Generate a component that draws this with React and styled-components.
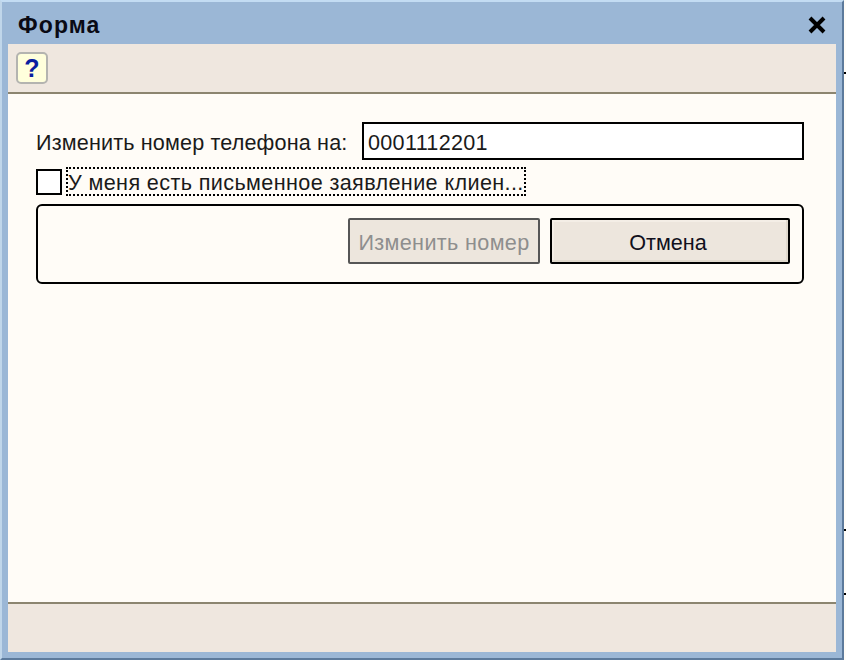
import React from "react";
import styled, { createGlobalStyle } from "styled-components";

const Global = createGlobalStyle`
  html, body { margin: 0; padding: 0; background: #fffcf7; }
  #root { width: 846px; height: 660px; overflow: hidden; }
  * { box-sizing: border-box; }
`;

const Page = styled.div`
  display: flex;
  width: 846px;
  height: 660px;
  font-family: "Liberation Sans", Arial, sans-serif;
  font-size: 21.6px;
  color: #1a1a1a;
`;
const Win = styled.div`
  width: 844px;
  height: 660px;
  display: flex;
  flex-direction: column;
  background: #9bb7d6;
  border-top: 2px solid #c3dcf3;
  border-left: 2px solid #c0d6ea;
  border-right: 2px solid #5c7a9c;
  border-bottom: 2px solid #5c7a9c;
  padding: 0 6px 6px;
`;
const Edge = styled.div`
  position: relative;
  width: 2px;
  height: 660px;
`;
const Tick = styled.i`
  position: absolute;
  left: 0;
  top: ${p => p.$y}px;
  width: 2px;
  height: 2px;
  background: #000;
`;
const TitleBar = styled.div`
  height: 42px;
  flex: none;
  display: flex;
  align-items: center;
  justify-content: space-between;
  padding: 3px 0 0 10px;
`;
const Title = styled.div`
  font-weight: 700;
  font-size: 23px;
  color: #0a0a14;
  letter-spacing: 1.1px;
  padding-top: 2px;
`;
const Close = styled.svg`
  display: block;
  width: 18px;
  height: 18px;
  margin-right: 10px;
`;
const Toolbar = styled.div`
  height: 50px;
  flex: none;
  background: #efe7df;
  border-bottom: 2px solid #8c8570;
  padding: 8px 0 0 8px;
`;
const HelpBtn = styled.div`
  width: 32px;
  height: 32px;
  border: 2px solid #b4b4b0;
  border-radius: 5px;
  background: #ffffdc;
  display: flex;
  align-items: center;
  justify-content: center;
  font-weight: 700;
  font-size: 25px;
  color: #0a1ea0;
`;
const Body = styled.div`
  flex: 1;
  background: #fffcf7;
  padding: 28px 32px 0 28px;
  display: flex;
  flex-direction: column;
`;
const Row = styled.div`
  display: flex;
  align-items: center;
  height: 38px;
`;
const Label = styled.div`
  width: 326px;
  flex: none;
  white-space: nowrap;
  padding-top: 4px;
  letter-spacing: 0.15px;
`;
const Input = styled.div`
  flex: 1;
  height: 38px;
  border: 2px solid #000;
  background: #fff;
  padding: 4px 0 0 4px;
  display: flex;
  align-items: center;
  line-height: 1;
  letter-spacing: 0.3px;
`;
const CheckRow = styled.div`
  display: flex;
  align-items: center;
  gap: 4px;
  margin-top: 7px;
  height: 29px;
`;
const CheckBox = styled.div`
  width: 26px;
  height: 26px;
  border: 2px solid #000;
  background: #fff;
`;
const CheckLabel = styled.div`
  width: 460px;
  height: 29px;
  border: 2px dotted #000;
  display: flex;
  align-items: center;
  white-space: nowrap;
  letter-spacing: 0.38px;
  padding-top: 3px;
`;
const Group = styled.div`
  margin-top: 8px;
  height: 80px;
  border: 2px solid #000;
  border-radius: 6px;
  display: flex;
  justify-content: flex-end;
  align-items: flex-start;
  gap: 10px;
  padding: 12px 12px 0 0;
`;
const Button = styled.div`
  height: 46px;
  width: ${p => p.$w}px;
  display: flex;
  align-items: center;
  justify-content: center;
  background: #ede6dd;
  border-radius: 2px;
  border: 2px solid ${p => (p.$disabled ? "#565656" : "#000")};
  color: ${p => (p.$disabled ? "#8e8e8e" : "#10101c")};
  box-shadow: ${p =>
    p.$disabled ? "none" : "inset -2px -2px 0 #e0d9cd, inset 2px 2px 0 #f4eee6"};
  white-space: nowrap;
  padding: 3px ${p => (p.$disabled ? 0 : 4)}px 0 0;
  letter-spacing: ${p => (p.$disabled ? 0.35 : 0)}px;
`;
const Footer = styled.div`
  height: 50px;
  flex: none;
  background: #efe7df;
  border-top: 2px solid #8c8570;
`;

export default function App() {
  return (
    <Page>
      <Global />
      <Win>
        <TitleBar>
          <Title>Форма</Title>
          <Close viewBox="0 0 18 18">
            <path d="M2 2 L16 16 M16 2 L2 16" stroke="#000" strokeWidth="4" fill="none" />
          </Close>
        </TitleBar>
        <Toolbar>
          <HelpBtn>?</HelpBtn>
        </Toolbar>
        <Body>
          <Row>
            <Label>Изменить номер телефона на:</Label>
            <Input>0001112201</Input>
          </Row>
          <CheckRow>
            <CheckBox />
            <CheckLabel>У меня есть письменное заявление клиен...</CheckLabel>
          </CheckRow>
          <Group>
            <Button $w={192} $disabled>Изменить номер</Button>
            <Button $w={240}>Отмена</Button>
          </Group>
        </Body>
        <Footer />
      </Win>
      <Edge>
        <Tick $y={72} />
        <Tick $y={529} />
        <Tick $y={593} />
      </Edge>
    </Page>
  );
}
